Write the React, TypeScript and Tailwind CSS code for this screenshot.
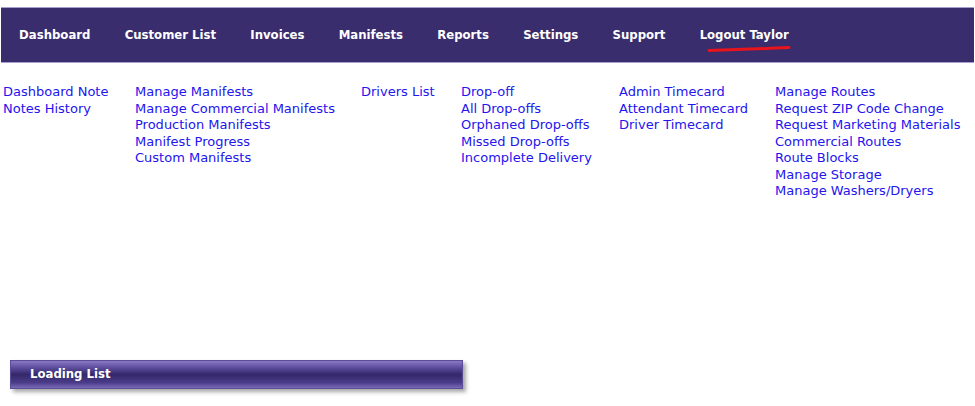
import React from "react"

const navItems = [
  "Dashboard",
  "Customer List",
  "Invoices",
  "Manifests",
  "Reports",
  "Settings",
  "Support",
  "Logout Taylor",
]

// column widths include the gap to the next column
const linkColumns: { width: string; links: string[] }[] = [
  { width: "w-[132px]", links: ["Dashboard Note", "Notes History"] },
  {
    width: "w-[226px]",
    links: [
      "Manage Manifests",
      "Manage Commercial Manifests",
      "Production Manifests",
      "Manifest Progress",
      "Custom Manifests",
    ],
  },
  { width: "w-[100px]", links: ["Drivers List"] },
  {
    width: "w-[158px]",
    links: ["Drop-off", "All Drop-offs", "Orphaned Drop-offs", "Missed Drop-offs", "Incomplete Delivery"],
  },
  { width: "w-[156px]", links: ["Admin Timecard", "Attendant Timecard", "Driver Timecard"] },
  {
    width: "w-[200px]",
    links: [
      "Manage Routes",
      "Request ZIP Code Change",
      "Request Marketing Materials",
      "Commercial Routes",
      "Route Blocks",
      "Manage Storage",
      "Manage Washers/Dryers",
    ],
  },
]

function NavBar() {
  return (
    <div className="mt-[7px] ml-px mr-px h-[56px] border-y border-[#a99fcf] bg-[#3a2d6e] flex items-center pl-[1px]">
      {navItems.map((item) => (
        <a
          key={item}
          href="#"
          className="relative px-[17.1px] text-[13px] font-bold text-white no-underline [font-family:'DejaVu_Sans_Condensed','Liberation_Sans',sans-serif] -mt-[1px]"
        >
          {item}
          {item === "Logout Taylor" && (
            <svg
              className="absolute left-[24px] top-[20px]"
              width="84"
              height="8"
              viewBox="0 0 84 8"
              fill="none"
            >
              <path
                d="M2 5.5 C 20 5, 50 4, 82 2.5"
                stroke="#e8131b"
                strokeWidth="3"
                strokeLinecap="round"
              />
            </svg>
          )}
        </a>
      ))}
    </div>
  )
}

function LinkGrid() {
  return (
    <div className="flex pl-[3px] pt-[21px]">
      {linkColumns.map((col, i) => (
        <div key={i} className={`${col.width} flex flex-col shrink-0`}>
          {col.links.map((link) => (
            <a
              key={link}
              href="#"
              className="text-[13px] leading-[16.5px] text-[#2414ee] no-underline whitespace-nowrap"
            >
              {link}
            </a>
          ))}
        </div>
      ))}
    </div>
  )
}

export default function App() {
  return (
    <div className="w-[975px] h-[406px] bg-white overflow-hidden [font-family:'DejaVu_Sans','Verdana',sans-serif]">
      <NavBar />
      <LinkGrid />
      <div className="mt-[160px] ml-[10px] w-[453px] h-[29px] border border-[#5a4c95] bg-[linear-gradient(to_bottom,#8878c4_0%,#5c4c9c_25%,#34286a_50%,#4a3c88_80%,#7a6ab8_100%)] shadow-[3px_3px_4px_rgba(0,0,0,0.35)] flex items-center pl-[19px]">
        <span className="text-[13px] font-bold text-white [font-family:'DejaVu_Sans_Condensed','Liberation_Sans',sans-serif]">
          Loading List
        </span>
      </div>
    </div>
  )
}
